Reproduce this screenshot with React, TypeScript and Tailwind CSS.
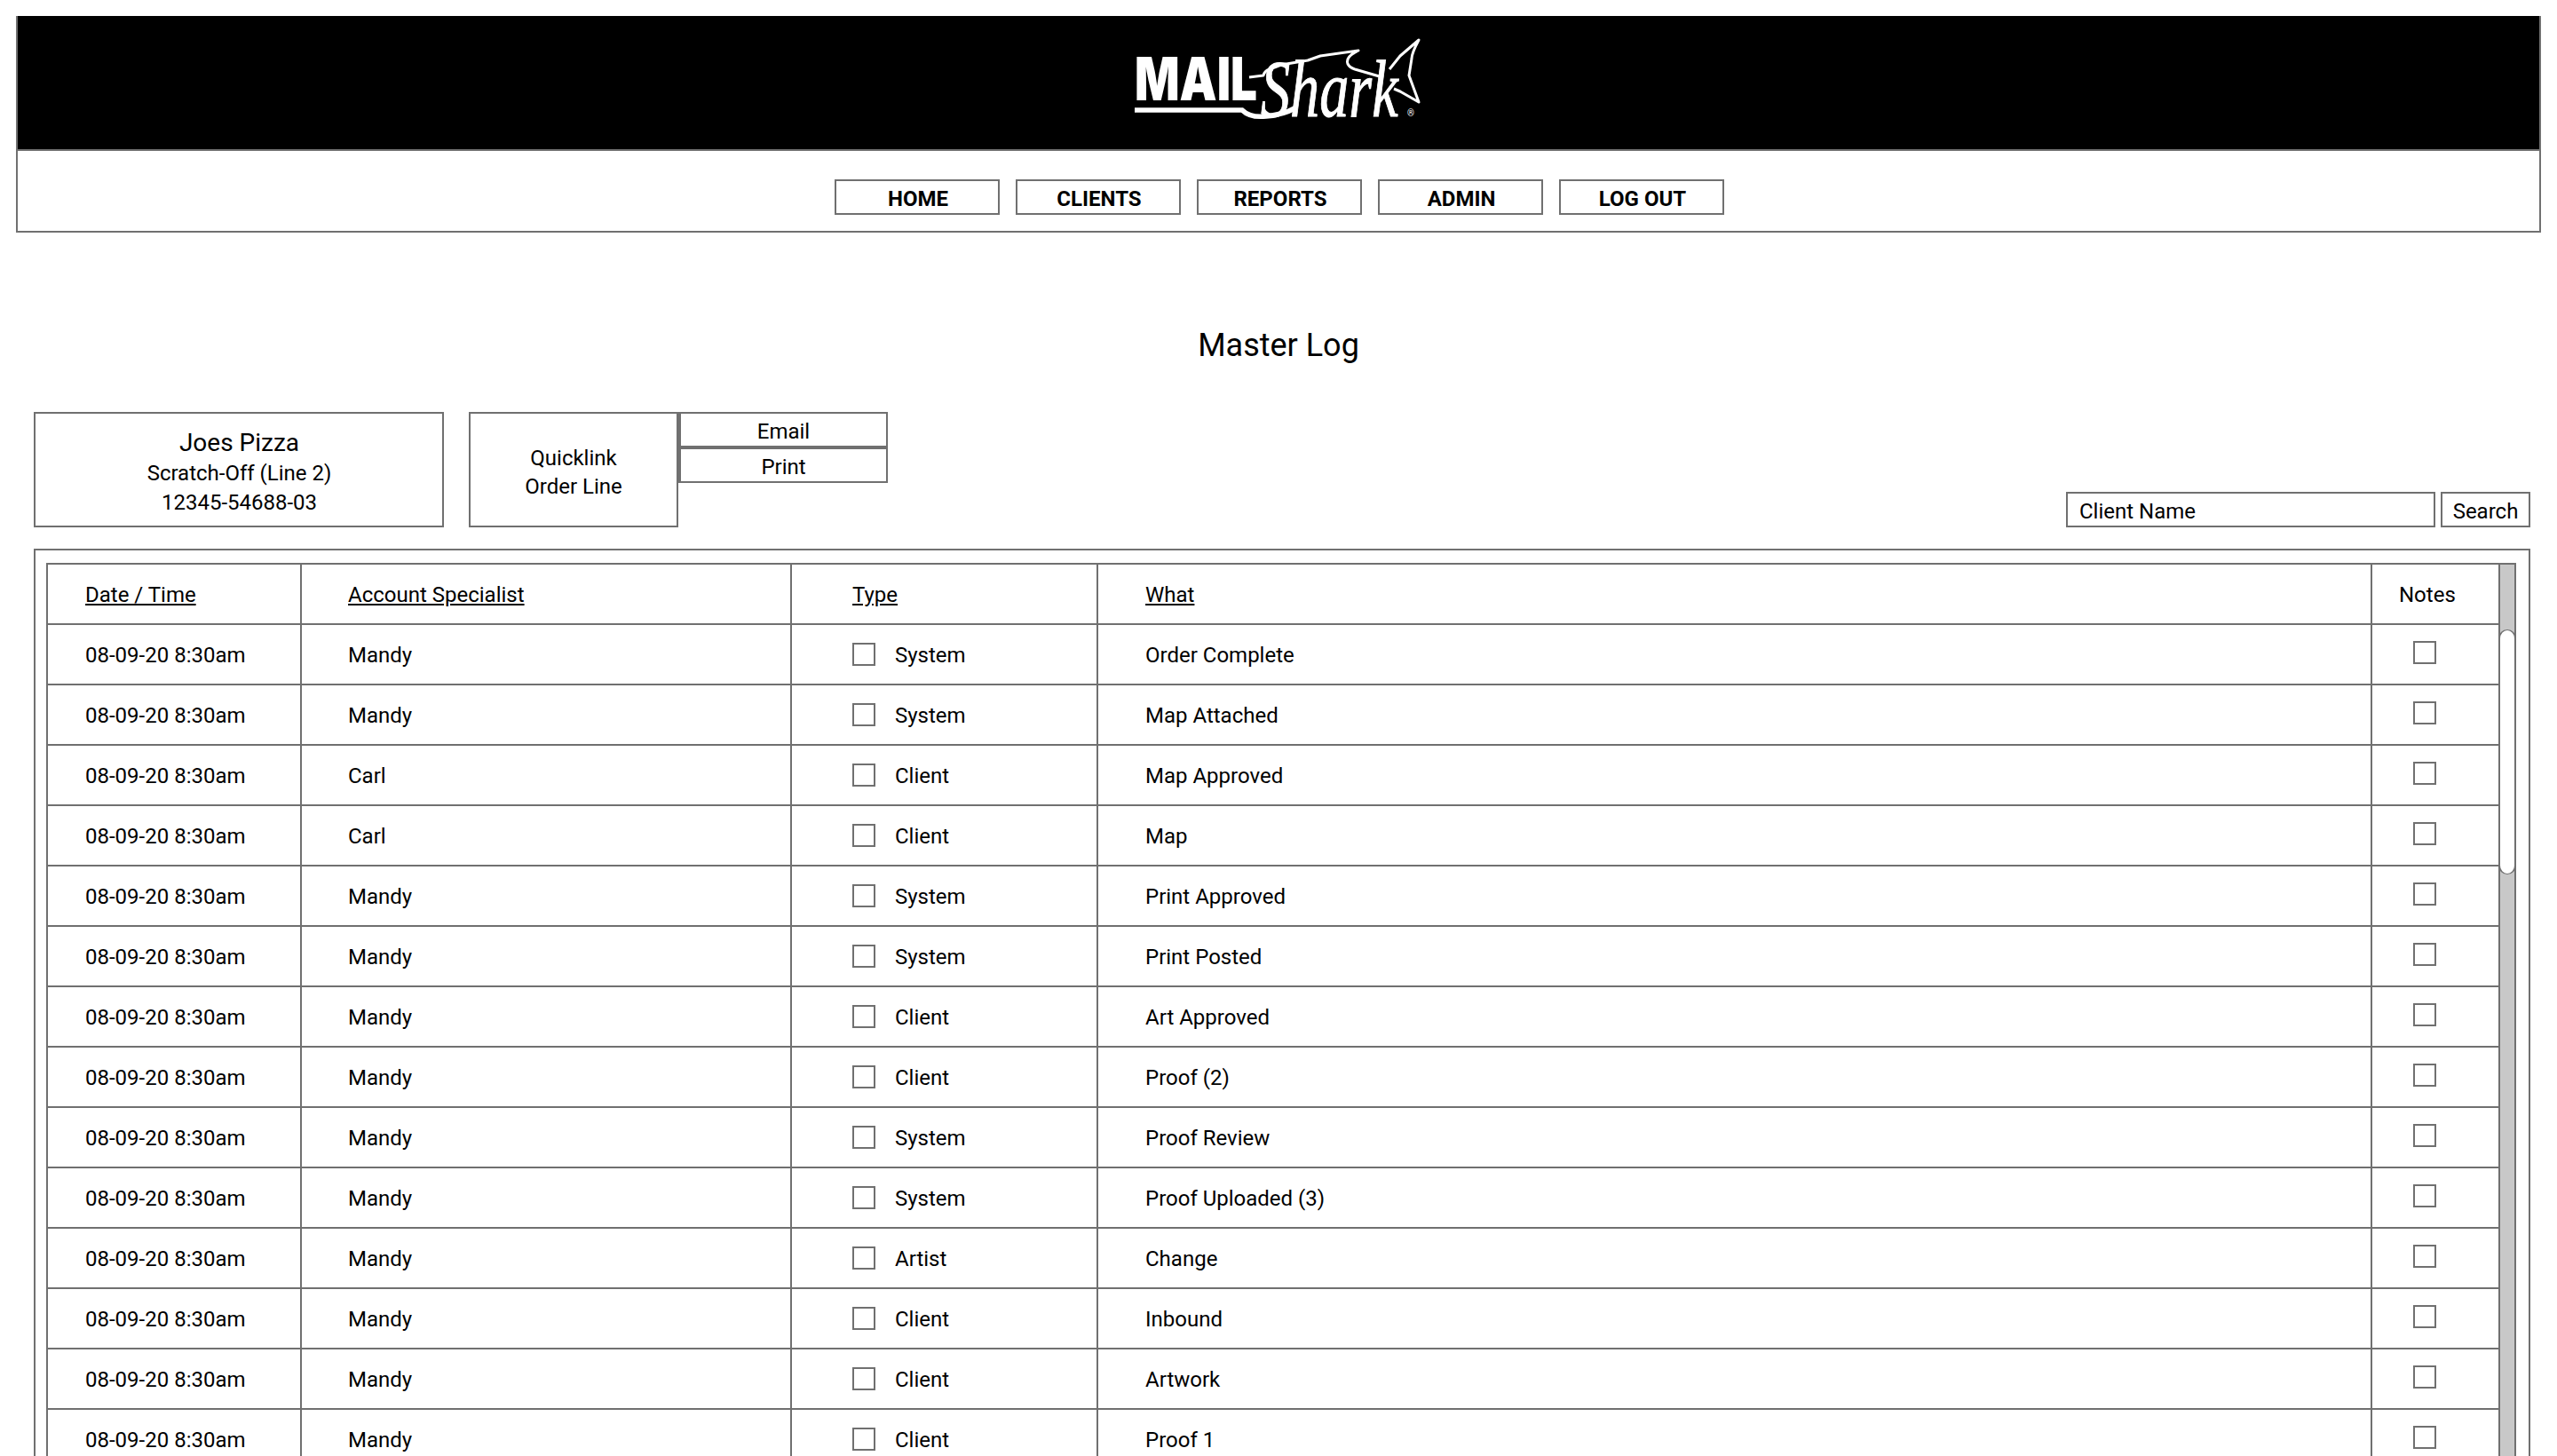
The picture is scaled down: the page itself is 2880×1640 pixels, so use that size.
const rows: [string, string, string][] = [
  ["Mandy", "System", "Order Complete"],
  ["Mandy", "System", "Map Attached"],
  ["Carl", "Client", "Map Approved"],
  ["Carl", "Client", "Map"],
  ["Mandy", "System", "Print Approved"],
  ["Mandy", "System", "Print Posted"],
  ["Mandy", "Client", "Art Approved"],
  ["Mandy", "Client", "Proof (2)"],
  ["Mandy", "System", "Proof Review"],
  ["Mandy", "System", "Proof Uploaded (3)"],
  ["Mandy", "Artist", "Change"],
  ["Mandy", "Client", "Inbound"],
  ["Mandy", "Client", "Artwork"],
  ["Mandy", "Client", "Proof 1"],
];

function Logo() {
  return (
    <svg width="400" height="110" viewBox="1240 30 400 110" className="block">
      <text transform="translate(1278 113) scale(0.79 1)" fill="#fff" fontFamily="Inter, sans-serif" fontWeight="900" fontSize="67">MAIL</text>
      <path d="M1278 124 H1399 Q1408 133 1426 131 Q1446 129 1458 122" fill="none" stroke="#fff" strokeWidth="5.5" />
      <path d="M1407 87 L1423 85 Q1424 80 1430 78 L1443 73 L1473 68 L1487 63 L1530 57 Q1515 64 1518 72 Q1520 76 1526 78 L1557 87" fill="none" stroke="#fff" strokeWidth="3" strokeLinejoin="round" />
      <path d="M1565 78 L1577 63 L1598 45 Q1590 60 1590 66 L1587 85 L1598 115 L1577 103 L1570 100" fill="none" stroke="#fff" strokeWidth="3" strokeLinejoin="round" />
      <text transform="translate(1420 131) scale(0.72 1)" fill="#fff" stroke="#fff" strokeWidth="1" fontFamily="'Liberation Serif', serif" fontStyle="italic" fontSize="92">Shark</text>
      <text x="1585" y="131" fill="#fff" fontFamily="Roboto, sans-serif" fontSize="10">®</text>
    </svg>
  );
}

function Box() {
  return <div className="h-[26px] w-[26px] border-2 border-[#707070] bg-white" />;
}

function NavButton({ label }: { label: string }) {
  return (
    <div className="flex h-[40px] w-[186px] items-center justify-center border-2 border-[#707070] pt-[3px] pl-[2px] text-[24px] font-bold leading-none">
      {label}
    </div>
  );
}

export default function App() {
  return (
    <div className="h-[1640px] overflow-hidden bg-white px-[18px] pt-[18px] text-[24px] text-black" style={{ fontFamily: "Roboto, sans-serif" }}>
      <div className="border-2 border-t-0 border-[#707070]">
        <div className="flex h-[152px] items-start justify-center border-b-2 border-[#707070] bg-black pt-[12px]">
          <Logo />
        </div>
        <div className="flex h-[90px] items-start justify-center gap-[18px] pt-[32px] pl-[2px]">
          {["HOME", "CLIENTS", "REPORTS", "ADMIN", "LOG OUT"].map((l) => (
            <NavButton key={l} label={l} />
          ))}
        </div>
      </div>

      <h1 className="mt-[103px] text-center text-[36px] leading-[48px]">Master Log</h1>

      <div className="mr-[12px] ml-[20px] mt-[51px] flex items-end">
        <div className="flex h-[130px] w-[462px] flex-col items-center justify-center border-2 border-[#707070] pt-[6px] pl-[1px]">
          <div className="text-[28px] leading-[36px]">Joes Pizza</div>
          <div className="text-[24px] leading-[33px]">Scratch-Off (Line 2)</div>
          <div className="text-[24px] leading-[33px]">12345-54688-03</div>
        </div>
        <div className="ml-[28px] flex h-[130px] w-[236px] flex-col items-center justify-center border-2 border-[#707070] pt-[6px] text-[24px] leading-[32px]">
          <div>Quicklink</div>
          <div>Order Line</div>
        </div>
        <div className="mb-[50px] flex w-[236px] flex-col self-start text-[24px]">
          <div className="flex h-[40px] items-center justify-center border-2 border-l-[3px] border-[#707070] pt-[3px]">Email</div>
          <div className="flex h-[40px] items-center justify-center border-2 border-l-[3px] border-[#707070] pt-[3px]">Print</div>
        </div>
        <div className="ml-auto flex gap-[6px] text-[24px]">
          <div className="flex h-[40px] w-[416px] items-center border-2 border-[#707070] pt-[3px] pl-[13px]">Client Name</div>
          <div className="flex h-[40px] w-[101px] items-center justify-center border-2 border-[#707070] pt-[3px]">Search</div>
        </div>
      </div>

      <div className="mr-[12px] ml-[20px] mt-[24px] flex border-2 border-[#707070] pt-[14px] pr-[14px] pl-[12px]">
        <div className="flex-1 border-t-2 border-l-2 border-[#707070]">
          <div className="flex h-[68px] border-b-2 border-[#707070]">
            <div className="flex w-[286px] items-center border-r-2 border-[#707070] pt-[2px] pl-[42px]"><span className="underline">Date / Time</span></div>
            <div className="flex w-[552px] items-center border-r-2 border-[#707070] pt-[2px] pl-[52px]"><span className="underline">Account Specialist</span></div>
            <div className="flex w-[345px] items-center border-r-2 border-[#707070] pt-[2px] pl-[68px]"><span className="underline">Type</span></div>
            <div className="flex w-[1435px] items-center border-r-2 border-[#707070] pt-[2px] pl-[53px]"><span className="underline">What</span></div>
            <div className="flex flex-1 items-center pt-[2px] pl-[30px]">Notes</div>
          </div>
          {rows.map(([who, type, what], i) => (
            <div key={i} className="flex h-[68px] border-b-2 border-[#707070]">
              <div className="flex w-[286px] items-center border-r-2 border-[#707070] pt-[2px] pl-[42px]">08-09-20 8:30am</div>
              <div className="flex w-[552px] items-center border-r-2 border-[#707070] pt-[2px] pl-[52px]">{who}</div>
              <div className="flex w-[345px] items-center border-r-2 border-[#707070] pl-[68px]"><Box /><span className="ml-[22px] pt-[2px]">{type}</span></div>
              <div className="flex w-[1435px] items-center border-r-2 border-[#707070] pt-[2px] pl-[53px]">{what}</div>
              <div className="flex flex-1 items-start pt-[18px] pl-[46px]"><Box /></div>
            </div>
          ))}
        </div>
        <div className="w-[20px] border-2 border-b-0 border-[#707070] bg-[#c8c8c8] pt-[73px]">
          <div className="-mx-[2px] h-[276px] rounded-full border-2 border-y-[1px] border-[#707070] bg-white" />
        </div>
      </div>
    </div>
  );
}
